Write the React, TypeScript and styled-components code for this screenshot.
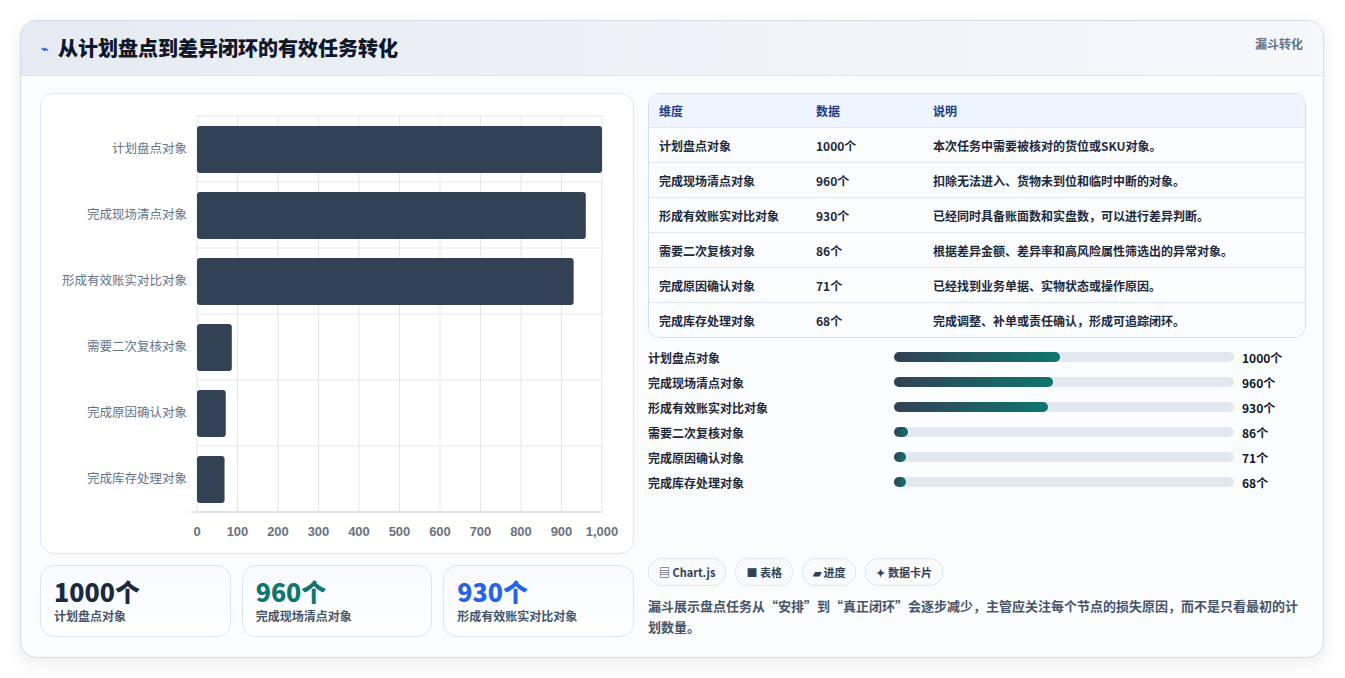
import React from "react";
import styled, { createGlobalStyle } from "styled-components";

const G = createGlobalStyle`
  body { margin:0; background:#fff; font-family: "Noto Sans CJK SC", sans-serif; }
`;
const Page = styled.div`padding:20px 21px 20px 20px;`;
const Card = styled.div`
  border:1px solid #d5dce6; border-radius:16px; overflow:hidden; background:#fbfcfe;
  box-shadow:0 6px 18px rgba(15,23,42,0.08); height:636px; display:flex; flex-direction:column;
`;
const Header = styled.div`
  height:55px; flex:none; box-sizing:border-box; padding:0 20px 0 20px; display:flex; justify-content:space-between; align-items:flex-start;
  background:linear-gradient(90deg,#e6ebf3,#f6f8fb); border-bottom:1px solid #dde5ef;
`;
const Title = styled.h1`
  margin:12px 0 0; font-size:20px; font-weight:800; color:#0f172a; display:flex; align-items:center; gap:10px;
`;
const Tag = styled.div`margin-top:14px; font-size:12px; font-weight:700; color:#64748b;`;
const Body = styled.div`flex:1; display:grid; grid-template-columns:594px 658px; gap:14px; padding:17px 18px 18px 19px;`;
const Col = styled.div<{ $gap: number }>`display:flex; flex-direction:column; gap:${p => p.$gap}px;`;
const ChartBox = styled.div`height:461px; box-sizing:border-box; border:1px solid #dfe6ef; border-radius:14px; background:#fff;`;
const Stats = styled.div`display:grid; grid-template-columns:repeat(3,1fr); gap:11px;`;
const Stat = styled.div`border:1px solid #dce6f3; border-radius:14px; background:linear-gradient(180deg,#f7faff,#fff); padding:9px 13px; height:72px; box-sizing:border-box;`;
const StatNum = styled.div<{ $c: string }>`font-size:25px; font-weight:800; color:${p => p.$c}; line-height:32px;`;
const StatLbl = styled.div`font-size:12px; color:#475569; font-weight:600; margin-top:0px;`;
const Table = styled.div`border:1px solid #d3dff0; border-radius:12px; overflow:hidden; background:#fff;`;
const Row = styled.div<{ $h?: boolean }>`
  display:grid; grid-template-columns:157px 117px 1fr; padding-left:10px; align-items:center; box-sizing:border-box;
  height:${p => p.$h ? 33 : 35}px; font-size:12px; font-weight:600;
  color:${p => p.$h ? "#1e3a8a" : "#1e293b"}; background:${p => p.$h ? "#eef5ff" : "#fafcfe"};
  border-top:${p => p.$h ? "none" : "1px solid #e2e8f0"};
`;
const Bars = styled.div`display:flex; flex-direction:column; gap:7px; margin-top:-4px;`;
const BarRow = styled.div`display:grid; grid-template-columns:246px 348px auto; align-items:center; font-size:12px; font-weight:600; color:#1e293b; height:18px;`;
const Track = styled.div`height:10px; background:#e2e8f0; border-radius:5px; margin-right:8px;`;
const Fill = styled.div`height:10px; border-radius:5px; background:linear-gradient(90deg,#334155,#0f766e); min-width:12px;`;
const Val = styled.span`font-weight:700; color:#0f172a;`;
const Footer = styled.div`margin-top:auto; padding-bottom:2px;`;
const Chips = styled.div`display:flex; gap:9px;`;
const Chip = styled.div`height:26px; padding:0 10px; border:1px solid #e2e8f0; border-radius:13px; background:#f8fafc; font-size:11px; font-weight:700; color:#334155; display:flex; align-items:center; gap:4px;`;
const Desc = styled.p`margin:9px 0 0; font-size:13px; line-height:21px; font-weight:600; color:#475569;`;

const data = [
  ["计划盘点对象", 1000, "本次任务中需要被核对的货位或SKU对象。"],
  ["完成现场清点对象", 960, "扣除无法进入、货物未到位和临时中断的对象。"],
  ["形成有效账实对比对象", 930, "已经同时具备账面数和实盘数，可以进行差异判断。"],
  ["需要二次复核对象", 86, "根据差异金额、差异率和高风险属性筛选出的异常对象。"],
  ["完成原因确认对象", 71, "已经找到业务单据、实物状态或操作原因。"],
  ["完成库存处理对象", 68, "完成调整、补单或责任确认，形成可追踪闭环。"],
] as const;

function Chart() {
  const x0 = 156, w = 405, top = 22, rh = 66;
  return (
    <svg width="592" height="459" style={{ display: "block" }}>
      {Array.from({ length: 11 }).map((_, i) => (
        <g key={i}>
          <line x1={x0 + i * w / 10} x2={x0 + i * w / 10} y1={top} y2={top + 6 * rh} stroke="#e5e7eb" />
          <text x={x0 + i * w / 10} y={442} textAnchor="middle" fontSize="13" fontWeight="600" fill="#6b7280" fontFamily="Liberation Sans, Arial, sans-serif">{i === 10 ? "1,000" : i * 100}</text>
        </g>
      ))}
      {Array.from({ length: 7 }).map((_, i) => (
        <line key={i} x1={x0} x2={x0 + w} y1={top + i * rh} y2={top + i * rh} stroke="#e5e7eb" />
      ))}
      <line x1={x0 - 6} x2={x0 + w} y1={top + 6 * rh} y2={top + 6 * rh} stroke="#cbd5e1" />
      {data.map((d, i) => (
        <g key={i}>
          <rect x={x0} y={top + i * rh + 10} width={d[1] / 1000 * w} height={47} rx="3" fill="#334155" />
          <text x={x0 - 10} y={top + i * rh + 37} textAnchor="end" fontSize="12.5" fill="#64748b">{d[0]}</text>
        </g>
      ))}
    </svg>
  );
}

export default function App() {
  return (
    <Page>
      <G />
      <Card>
        <Header>
          <Title><span style={{ color: "#2563eb", fontSize: 12 }}>⌁</span>从计划盘点到差异闭环的有效任务转化</Title>
          <Tag>漏斗转化</Tag>
        </Header>
        <Body>
          <Col $gap={11}>
            <ChartBox><Chart /></ChartBox>
            <Stats>
              <Stat><StatNum $c="#1e293b">1000个</StatNum><StatLbl>计划盘点对象</StatLbl></Stat>
              <Stat><StatNum $c="#0f766e">960个</StatNum><StatLbl>完成现场清点对象</StatLbl></Stat>
              <Stat><StatNum $c="#2563eb">930个</StatNum><StatLbl>形成有效账实对比对象</StatLbl></Stat>
            </Stats>
          </Col>
          <Col $gap={14}>
            <Table>
              <Row $h><span>维度</span><span>数据</span><span>说明</span></Row>
              {data.map((d, i) => (
                <Row key={i}><span>{d[0]}</span><span>{d[1]}个</span><span>{d[2]}</span></Row>
              ))}
            </Table>
            <Bars>
              {data.map((d, i) => (
                <BarRow key={i}>
                  <span>{d[0]}</span>
                  <Track><Fill style={{ width: `${d[1] / 2050 * 100}%` }} /></Track>
                  <Val>{d[1]}个</Val>
                </BarRow>
              ))}
            </Bars>
            <Footer>
              <Chips>
                <Chip>▤ Chart.js</Chip>
                <Chip>■ 表格</Chip>
                <Chip>▰ 进度</Chip>
                <Chip>✦ 数据卡片</Chip>
              </Chips>
              <Desc>漏斗展示盘点任务从“安排”到“真正闭环”会逐步减少，主管应关注每个节点的损失原因，而不是只看最初的计划数量。</Desc>
            </Footer>
          </Col>
        </Body>
      </Card>
    </Page>
  );
}
